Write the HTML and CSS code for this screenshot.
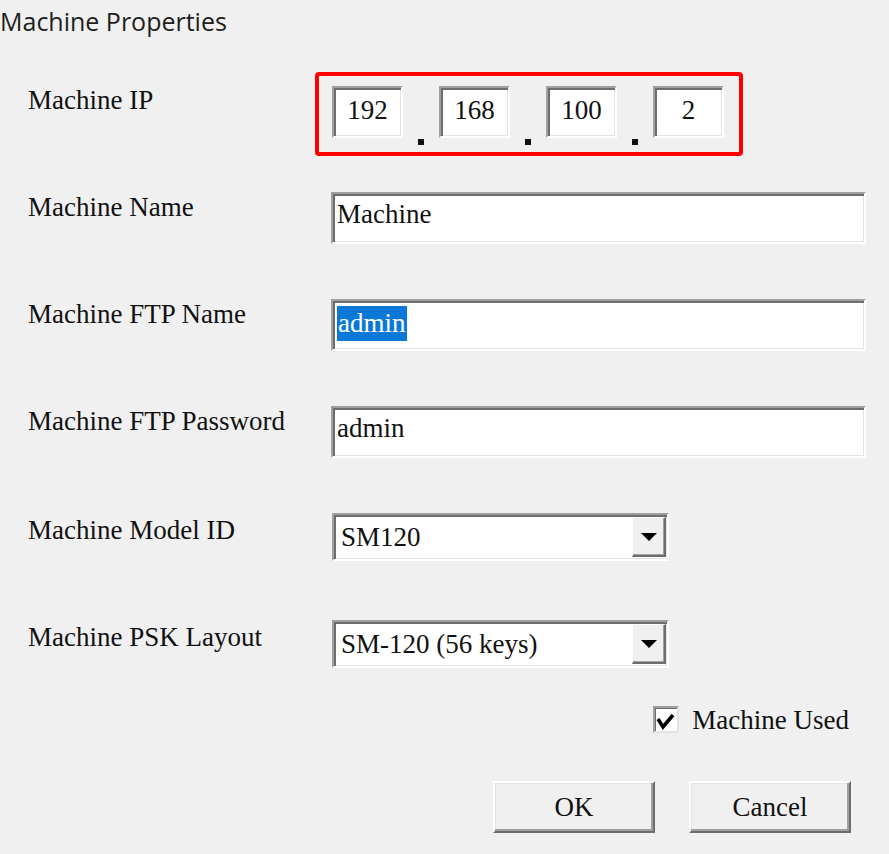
FILE: index.html
```html
<!DOCTYPE html>
<html lang="en">
<head>
<meta charset="UTF-8" />
<meta name="viewport" content="width=device-width, initial-scale=1.0"/>
<title>Machine Properties</title>
<link rel="stylesheet" href="styles.css">
</head>
<body>
<div class="title">Machine Properties</div>
<div class="form">
  <div class="row row-ip">
    <div class="label label-ip">Machine IP</div>
    <div class="ip">
      <div class="octet sunken">192</div>
      <div class="sep"><i class="dot"></i></div>
      <div class="octet sunken">168</div>
      <div class="sep"><i class="dot"></i></div>
      <div class="octet sunken">100</div>
      <div class="sep"><i class="dot"></i></div>
      <div class="octet sunken">2</div>
    </div>
  </div>
  <div class="row">
    <div class="label">Machine Name</div>
    <div class="field sunken">Machine</div>
  </div>
  <div class="row">
    <div class="label">Machine FTP Name</div>
    <div class="field sunken"><span class="selected">admin</span></div>
  </div>
  <div class="row">
    <div class="label">Machine FTP Password</div>
    <div class="field sunken">admin</div>
  </div>
  <div class="row">
    <div class="label label-combo">Machine Model ID</div>
    <div class="combo sunken">
      <span class="combo-value">SM120</span>
      <span class="combo-btn"><i class="arrow"></i></span>
    </div>
  </div>
  <div class="row row-last">
    <div class="label label-combo">Machine PSK Layout</div>
    <div class="combo sunken">
      <span class="combo-value">SM-120 (56 keys)</span>
      <span class="combo-btn"><i class="arrow"></i></span>
    </div>
  </div>
  <div class="check-row">
    <span class="checkbox">
      <svg width="22" height="23" viewBox="0 0 22 23"><path d="M3 11 L8 19 L18 7" fill="none" stroke="#000" stroke-width="3.6"/></svg>
    </span>
    <span class="check-label">Machine Used</span>
  </div>
  <div class="buttons">
    <button class="btn">OK</button>
    <button class="btn">Cancel</button>
  </div>
</div>
</body>
</html>
```

FILE: styles.css
```css
html, body {
  background-color: #f0f0f0;
}
body {
  margin: 0;
  color: #111;
  font-family: 'Liberation Serif', 'Times New Roman', serif;
  font-size: 27px;
  line-height: 31px;
}
.title {
  height: 72px;
  box-sizing: border-box;
  padding-top: 4px;
  font-family: 'Open Sans', 'Noto Sans', sans-serif;
  font-size: 25px;
  line-height: 34px;
  color: #1e1e1e;
}
.form {
  padding-left: 28px;
  width: 823px;
}
.row {
  display: flex;
  align-items: flex-start;
  height: 107px;
  box-sizing: border-box;
  padding-top: 13px;
}
.row-ip {
  padding-top: 0;
}
.row-last {
  height: auto;
}
.label {
  width: 303px;
  flex: none;
}
.label-ip {
  margin-top: 13px;
}
.label-combo {
  margin-top: 2px;
}

/* sunken 3D edge, like the old win32 controls */
.sunken {
  flex: none;
  background: #fff;
  border: 2px solid;
  border-color: #a0a0a0 #fff #fff #a0a0a0;
  box-shadow: inset 2px 2px 0 #6d6d6d, inset -1px -1px 0 #e3e3e3;
  box-sizing: border-box;
}

.ip {
  display: flex;
  align-items: flex-start;
  margin-left: -16px;
  padding: 10px 15px 7px 13px;
  border: 4px solid #ff0000;
  border-radius: 4px;
}
.octet {
  width: 71px;
  height: 52px;
  padding-top: 7px;
  text-align: center;
}
.sep {
  width: 36px;
  height: 59px;
  display: flex;
  justify-content: center;
  align-items: flex-end;
}
.dot {
  width: 6px;
  height: 6px;
  background: #111;
}

.field {
  width: 535px;
  height: 52px;
  padding: 5px 4px;
}
.selected {
  display: inline-block;
  line-height: 35px;
  padding: 0 1px;
  background: #0a78d7;
  color: #fff;
}

.combo {
  display: flex;
  width: 337px;
  height: 48px;
  margin-left: 1px;
}
.combo-value {
  flex: 1;
  padding: 7px 0 0 7px;
}
.combo-btn {
  width: 34px;
  margin: 2px 1px 2px 0;
  display: flex;
  justify-content: center;
  align-items: center;
  background: #f0f0f0;
  border-style: solid;
  border-width: 1px 2px 2px 1px;
  border-color: #fff #6d6d6d #6d6d6d #fff;
  box-shadow: inset -1px -1px 0 #a0a0a0;
  box-sizing: border-box;
}
.arrow {
  width: 0;
  height: 0;
  border-left: 8px solid transparent;
  border-right: 8px solid transparent;
  border-top: 8px solid #000;
}

.check-row {
  display: flex;
  justify-content: flex-end;
  align-items: flex-start;
  margin-top: 37px;
  padding-right: 2px;
}
.checkbox {
  width: 26px;
  height: 27px;
  margin-top: 1px;
  margin-right: 13px;
  display: flex;
  background: #fff;
  border: 2px solid;
  border-color: #a0a0a0 #e3e3e3 #e3e3e3 #a0a0a0;
  box-shadow: inset 1px 1px 0 #6d6d6d;
  box-sizing: border-box;
}

.buttons {
  display: flex;
  justify-content: flex-end;
  gap: 34px;
  margin-top: 45px;
}
.btn {
  width: 162px;
  height: 52px;
  padding: 0;
  font: inherit;
  color: #111;
  background: #f0f0f0;
  border: 2px solid;
  border-color: #fff #6d6d6d #6d6d6d #fff;
  box-shadow: inset -2px -2px 0 #a0a0a0, inset 1px 1px 0 #e3e3e3;
}
```
